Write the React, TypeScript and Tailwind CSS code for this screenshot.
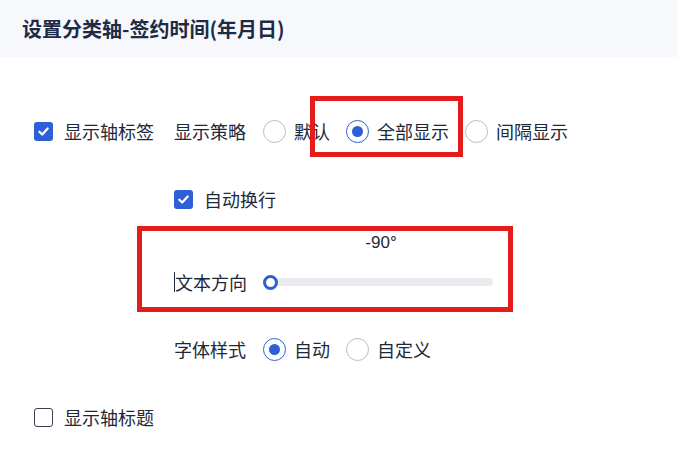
import React from "react";

const font = { fontFamily: '"Noto Sans CJK SC", "Noto Sans", sans-serif' };

function Check({ checked }: { checked: boolean }) {
  return checked ? (
    <span className="flex h-[19px] w-[19px] shrink-0 items-center justify-center rounded-[3px] bg-[#2d5fd6]">
      <svg width="13" height="13" viewBox="0 0 14 14" fill="none">
        <path d="M2.5 7.2 L5.6 10.2 L11.5 3.8" stroke="white" strokeWidth="2.4" strokeLinecap="round" strokeLinejoin="round" />
      </svg>
    </span>
  ) : (
    <span className="h-[19px] w-[19px] shrink-0 rounded-[3px] border-[1.5px] border-[#3a4252] bg-white" />
  );
}

function Radio({ checked, label }: { checked?: boolean; label: string }) {
  return (
    <div className="flex items-center gap-[8px]">
      {checked ? (
        <span className="flex h-[23px] w-[23px] items-center justify-center rounded-full border border-[#2d5fd6] bg-white">
          <span className="h-[11px] w-[11px] rounded-full bg-[#2d5fd6]" />
        </span>
      ) : (
        <span className="h-[23px] w-[23px] rounded-full border border-[#b9bdc6] bg-white" />
      )}
      <span>{label}</span>
    </div>
  );
}

export default function App() {
  return (
    <div className="relative h-[470px] w-[677px] overflow-hidden bg-white text-[#1d2939]" style={font}>
      <div className="flex h-[57px] items-center bg-[#f6f8fc] px-[22px] text-[20px] font-bold text-[#1f2a44]">
        设置分类轴-签约时间(年月日)
      </div>

      <div className="flex flex-col text-[18px] leading-[24px]">
        <div className="mt-[62px] flex items-center">
          <div className="flex w-[174px] items-center gap-[11px] pl-[34px]">
            <Check checked />
            <span>显示轴标签</span>
          </div>
          <span className="mr-[17px]">显示策略</span>
          <div className="flex items-center gap-[16px]">
            <Radio label="默认" />
            <Radio checked label="全部显示" />
            <Radio label="间隔显示" />
          </div>
        </div>

        <div className="mt-[44px] flex items-center gap-[11px] pl-[174px]">
          <Check checked />
          <span>自动换行</span>
        </div>

        <div className="mt-[22px] flex pl-[270px]">
          <div
            className="w-[222px] text-center text-[17px] leading-[20px]"
            style={{ fontFamily: '"Liberation Sans", Arial, sans-serif' }}
          >
            -90°
          </div>
        </div>

        <div className="mt-[17px] flex items-center pl-[174px]">
          <span className="border-l border-[#1d2939] leading-[20px]">文本方向</span>
          <div className="relative ml-[16px] flex h-[24px] w-[230px] items-center">
            <div className="ml-[8px] h-[8px] w-[222px] rounded-full bg-[#e9ebef]" />
            <span className="absolute left-0 top-[4.5px] h-[15px] w-[15px] rounded-full border-[3px] border-[#2d5fd6] bg-white" />
          </div>
        </div>

        <div className="mt-[43px] flex items-center pl-[174px]">
          <span className="mr-[17px]">字体样式</span>
          <div className="flex items-center gap-[16px]">
            <Radio checked label="自动" />
            <Radio label="自定义" />
          </div>
        </div>

        <div className="mt-[44px] flex items-center gap-[11px] pl-[34px]">
          <Check checked={false} />
          <span>显示轴标题</span>
        </div>
      </div>

      <div className="absolute left-[310px] top-[96px] h-[61px] w-[153px] border-[5px] border-[#e51c1c]" />
      <div className="absolute left-[137px] top-[226px] h-[86px] w-[376px] border-[5px] border-[#e51c1c]" />
    </div>
  );
}
